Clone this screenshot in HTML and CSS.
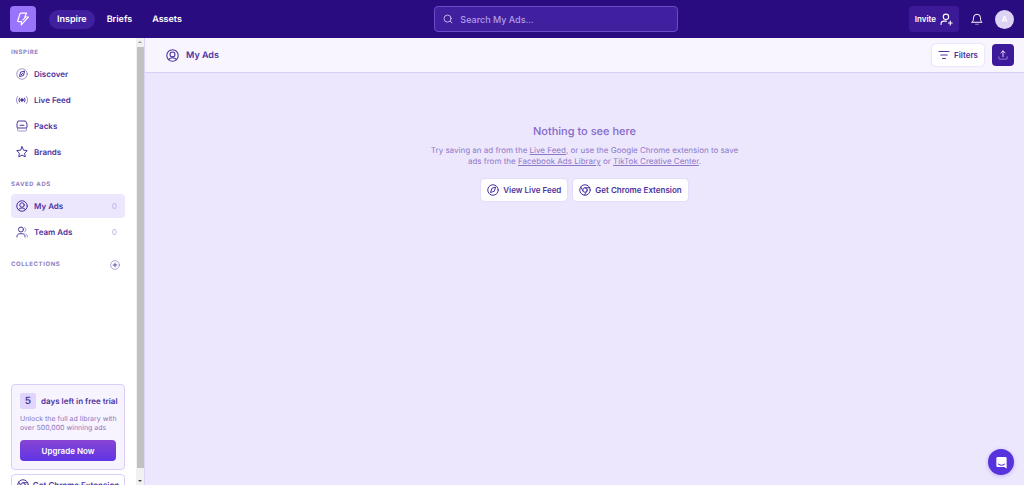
FILE: index.html
```html
<!DOCTYPE html>
<html lang="en">
<head>
  <meta charset="UTF-8" />
  <meta name="viewport" content="width=device-width, initial-scale=1.0"/>
  <title>My Ads</title>
  <link rel="stylesheet" href="styles.css">
</head>
<body>

  <!-- shared icons -->
  <svg class="sprite" aria-hidden="true">
    <symbol id="compass" viewBox="0 0 24 24">
      <circle cx="12" cy="12" r="10.500"/>
      <path d="M17 7l-2.500 7.500-7.500 2.500 2.500-7.500z"/>
    </symbol>
    <symbol id="user-circle" viewBox="0 0 24 24">
      <circle cx="12" cy="12" r="10.500"/>
      <circle cx="12" cy="10" r="4.500"/>
      <path d="M5 19.500c1.500-2.500 4-3.500 7-3.500s5.500 1 7 3.500"/>
    </symbol>
    <symbol id="chrome" viewBox="0 0 24 24">
      <circle cx="12" cy="12" r="10.500"/>
      <circle cx="12" cy="12" r="4.500"/>
      <path d="M21.500 7.500H12M3.500 6L8 14M10.900 22L16 14"/>
    </symbol>
  </svg>

  <header class="topbar">
    <div class="topbar-left">
      <a href="#" class="logo" aria-label="Home">
        <svg viewBox="0 0 24 24"><path d="M8.500 2H18l-3 6.500h6.500L9 22l.5-5.500H4q-1.500 0-1-1.500L6.500 4q.5-2 2-2z"/><path d="M16 9.500L12 13.500"/></svg>
      </a>
      <nav class="tabs">
        <a href="#" class="tab active">Inspire</a>
        <a href="#" class="tab">Briefs</a>
        <a href="#" class="tab">Assets</a>
      </nav>
    </div>

    <label class="search">
      <svg class="icon" viewBox="0 0 24 24"><circle cx="11" cy="11" r="8.500"/><path d="M17.500 17.500l4 4"/></svg>
      <input type="search" placeholder="Search My Ads..." aria-label="Search My Ads" />
    </label>

    <div class="topbar-right">
      <button type="button" class="invite">
        Invite
        <svg class="icon" viewBox="0 0 24 24"><circle cx="11" cy="7" r="5"/><path d="M2 21v-1.500c0-3 2.500-4.500 5-4.500h5M19 15v7M15.500 18.500h7"/></svg>
      </button>
      <button type="button" class="bell" aria-label="Notifications">
        <svg class="icon" viewBox="0 0 24 24"><path d="M2 18.500h20c-2.500-2-3-4-3-9a7 7 0 0 0-14 0c0 5-.5 7-3 9z"/><path class="faint" d="M9 22.500h6"/></svg>
      </button>
      <button type="button" class="avatar">A</button>
    </div>
  </header>

  <div class="layout">
    <aside class="sidebar">
      <div class="sidebar-content">
        <section class="group">
          <h2>Inspire</h2>
          <a href="#" class="item">
            <svg class="icon" viewBox="0 0 24 24"><circle class="faint" cx="12" cy="12" r="10.500"/><path d="M17 7l-2 8-8 2 2-8z"/><path d="M13.500 10.500l-3 3"/></svg>
            Discover
          </a>
          <a href="#" class="item">
            <svg class="icon" viewBox="0 0 24 24"><circle class="solid" cx="12" cy="12" r="2.500"/><path d="M7 8a6.500 6.500 0 0 0 0 8M17 8a6.500 6.500 0 0 1 0 8"/><path class="faint" d="M3.500 4.500a11 11 0 0 0 0 15M20.500 4.500a11 11 0 0 1 0 15"/></svg>
            Live Feed
          </a>
          <a href="#" class="item">
            <svg class="icon" viewBox="0 0 24 24"><path d="M5 2h14l3 6v6a2 2 0 0 1-2 2H4a2 2 0 0 1-2-2V8zM8 10.500h8"/><path class="faint" d="M3 16v4a2 2 0 0 0 2 2h14a2 2 0 0 0 2-2v-4"/></svg>
            Packs
          </a>
          <a href="#" class="item">
            <svg class="icon" viewBox="0 0 24 24"><path d="M12 1.500l3.200 6.800 7.300 1-5.300 5.100 1.300 7.300L12 18.200l-6.500 3.500 1.300-7.300L1.500 9.300l7.300-1z"/></svg>
            Brands
          </a>
        </section>

        <section class="group">
          <h2>Saved Ads</h2>
          <a href="#" class="item selected">
            <svg class="icon"><use href="#user-circle"/></svg>
            My Ads
            <span class="count">0</span>
          </a>
          <a href="#" class="item">
            <svg class="icon" viewBox="0 0 24 24"><circle cx="10" cy="7" r="5"/><path d="M2 22v-1.500c0-3 2.500-5 5-5h6c2.500 0 5 2 5 5V22"/><path class="faint" d="M17 3c4 1 4 8 0 9M20 16c2 1 3 3 3 6"/></svg>
            Team Ads
            <span class="count">0</span>
          </a>
        </section>

        <section class="group collections">
          <div class="group-head">
            <h2>Collections</h2>
            <button type="button" aria-label="Add collection">
              <svg class="icon" viewBox="0 0 24 24"><circle class="faint" cx="12" cy="12" r="10.500"/><path d="M12 7.500v9M7.500 12h9"/></svg>
            </button>
          </div>
        </section>

        <div class="trial">
          <div class="trial-head"><span class="days">5</span>days left in free trial</div>
          <p>Unlock the full ad library with over 500,000 winning ads</p>
          <button type="button">Upgrade Now</button>
        </div>
        <a href="#" class="extension">
          <svg class="icon"><use href="#chrome"/></svg>
          Get Chrome Extension
        </a>
      </div>
      <div class="scrollbar" aria-hidden="true">
        <span class="arrow up"></span>
        <span class="thumb"></span>
        <span class="arrow down"></span>
      </div>
    </aside>

    <main class="main">
      <div class="page-head">
        <h1><svg class="icon"><use href="#user-circle"/></svg>My Ads</h1>
        <div class="actions">
          <button type="button" class="btn">
            <svg class="icon" viewBox="0 0 24 24"><path d="M2 5h20M5.500 12h13M9 19h6"/></svg>
            Filters
          </button>
          <button type="button" class="upload" aria-label="Upload">
            <svg class="icon" viewBox="0 0 24 24"><path d="M12 16V2M7 7l5-5 5 5"/><path class="faint" d="M2 16v4a2 2 0 0 0 2 2h16a2 2 0 0 0 2-2v-4"/></svg>
          </button>
        </div>
      </div>

      <div class="empty">
        <h2>Nothing to see here</h2>
        <p>Try saving an ad from the <a href="#">Live Feed</a>, or use the Google Chrome extension to save ads from the <a href="#">Facebook Ads Library</a> or <a href="#">TikTok Creative Center</a>.</p>
        <div class="empty-actions">
          <button type="button" class="btn"><svg class="icon"><use href="#compass"/></svg>View Live Feed</button>
          <button type="button" class="btn"><svg class="icon"><use href="#chrome"/></svg>Get Chrome Extension</button>
        </div>
      </div>
    </main>
  </div>

  <button type="button" class="chat" aria-label="Open chat">
    <svg viewBox="0 0 24 24"><path class="bubble" d="M5 2h14a2.500 2.500 0 0 1 2.500 2.500V23L17 20.500H5A2.500 2.500 0 0 1 2.500 18V4.500A2.500 2.500 0 0 1 5 2z"/><path class="smile" d="M6.500 15c3.500 2.500 7.500 2.500 11 0"/></svg>
  </button>

</body>
</html>
```

FILE: styles.css
```css
* { margin: 0; padding: 0; box-sizing: border-box; }

body {
  height: 100vh;
  display: flex;
  flex-direction: column;
  overflow: hidden;
  font-family: Inter, sans-serif;
  font-size: 8px;
  font-weight: 600;
  text-rendering: geometricPrecision;
  color: #4c32a0;
  background: #ede7fe;
}

a { color: inherit; text-decoration: none; }

button {
  font: inherit;
  color: inherit;
  border: none;
  background: none;
  cursor: pointer;
}

.sprite { position: absolute; width: 0; height: 0; }

.icon {
  width: 12px;
  height: 12px;
  flex: none;
  fill: none;
  stroke: currentColor;
  stroke-width: 2;
  stroke-linecap: round;
  stroke-linejoin: round;
}

.icon .faint { opacity: 0.5; }
.icon .solid { fill: currentColor; }

/* top bar */
.topbar {
  height: 38px;
  flex: none;
  padding: 0 10px;
  display: flex;
  align-items: center;
  justify-content: space-between;
  background: #2a0c81;
  color: #fff;
}

.topbar-left,
.topbar-right,
.tabs {
  display: flex;
  align-items: center;
}

.topbar-left {
  gap: 13px;
  padding-right: 14px;
}

.logo {
  width: 26px;
  height: 26px;
  display: grid;
  place-items: center;
  border-radius: 4px;
  background: #9874fb;
}

.logo svg {
  width: 14px;
  height: 14px;
  fill: none;
  stroke: #fff;
  stroke-width: 2;
  stroke-linecap: round;
  stroke-linejoin: round;
}

.tabs { gap: 4px; }

.tab {
  padding: 0 8px;
  font-size: 9px;
  line-height: 19px;
  border-radius: 10px;
}

.tab.active { background: #4120a0; }

.search {
  width: 244px;
  height: 26px;
  padding: 0 8px;
  display: flex;
  align-items: center;
  gap: 7px;
  border: 1px solid #6a4bc8;
  border-radius: 4px;
  background: #4120a0;
  color: #d9ccfb;
}

.search .icon { width: 10px; height: 10px; }

.search input {
  flex: 1;
  min-width: 0;
  border: none;
  outline: none;
  background: none;
  color: #fff;
  font: 500 9px Inter, sans-serif;
}

.search input::placeholder { color: #b19ee6; }

.invite {
  height: 26px;
  padding: 0 6px;
  display: flex;
  align-items: center;
  gap: 4px;
  border-radius: 4px;
  background: #3b1997;
}

.invite .icon { width: 13px; height: 13px; }

.bell { margin: 0 12px; display: flex; }

.avatar {
  width: 19px;
  height: 19px;
  border-radius: 50%;
  background: #ddd3f5;
  color: #fff;
}

/* sidebar */
.layout {
  flex: 1;
  min-height: 0;
  display: flex;
}

.sidebar {
  width: 145px;
  flex: none;
  display: flex;
  overflow: hidden;
  background: #fff;
  border-right: 1px solid #ddd3f8;
}

.sidebar-content {
  flex: 1;
  min-width: 0;
  padding: 10px 11px 0;
}

.group { margin-bottom: 16px; }

.group h2 {
  margin-bottom: 4px;
  font-size: 6px;
  line-height: 10px;
  letter-spacing: 0.1em;
  text-transform: uppercase;
  color: #8f80c2;
}

.item {
  height: 24px;
  padding: 0 8px 0 5px;
  margin-bottom: 2px;
  display: flex;
  align-items: center;
  gap: 6px;
  border-radius: 4px;
}

.item.selected { background: #ede7fe; }

.count {
  margin-left: auto;
  font-weight: 500;
  color: #c6b6f3;
}

.group-head {
  display: flex;
  justify-content: space-between;
  padding-right: 5px;
}

.group-head button { height: 10px; }
.group-head .icon { width: 10px; height: 10px; }

.collections { min-height: 108px; }

.trial {
  padding: 8px;
  border: 1px solid #d9cef8;
  border-radius: 4px;
  background: #f7f4ff;
}

.trial-head {
  display: flex;
  align-items: center;
  gap: 5px;
  white-space: nowrap;
}

.days {
  width: 16px;
  flex: none;
  font-size: 10px;
  line-height: 16px;
  text-align: center;
  border-radius: 2px;
  background: #e0d6fc;
}

.trial p {
  margin: 5px -6px 8px 0;
  font-size: 7px;
  font-weight: 400;
  line-height: 9px;
  color: #8a76c0;
}

.trial button {
  width: 100%;
  height: 21px;
  border-radius: 4px;
  background: linear-gradient(#8744d2, #5f35e5);
  color: #fff;
}

.extension {
  height: 22px;
  margin-top: 4px;
  display: flex;
  align-items: center;
  justify-content: center;
  gap: 4px;
  border: 1px solid #d9cef8;
  border-radius: 4px;
  white-space: nowrap;
}

.scrollbar {
  width: 8px;
  flex: none;
  display: flex;
  flex-direction: column;
  align-items: center;
  background: #f1f1f1;
}

.thumb {
  flex: 1;
  width: 7px;
  margin: 4px 0 12px;
  background: #c1c1c1;
}

.arrow { border: 2px solid transparent; }

.arrow.up {
  margin-top: 3px;
  border-top: none;
  border-bottom-color: #999;
}

.arrow.down {
  margin-bottom: 3px;
  border-bottom: none;
  border-top-color: #444;
}

/* main area */
.main { flex: 1; min-width: 0; }

.page-head {
  height: 35px;
  padding: 0 10px 0 21px;
  display: flex;
  align-items: center;
  justify-content: space-between;
  background: #f8f5ff;
  border-bottom: 1px solid #d9cef8;
}

.page-head h1 {
  display: flex;
  align-items: center;
  gap: 7px;
  font-size: 9px;
  font-weight: 600;
}

.page-head h1 .icon { width: 13px; height: 13px; }

.actions { display: flex; gap: 8px; }

.btn {
  height: 22px;
  padding: 0 6px;
  display: flex;
  align-items: center;
  gap: 4px;
  border-radius: 4px;
  background: #fff;
  box-shadow: 0 0 2px #cfc2f2;
}

.upload {
  width: 22px;
  height: 22px;
  display: grid;
  place-items: center;
  border-radius: 4px;
  background: #3d1a9c;
  color: #fff;
}

.upload .icon { width: 10px; height: 10px; }

.empty {
  padding: 50px 20px 0;
  text-align: center;
}

.empty h2 {
  font-size: 11px;
  font-weight: 500;
  line-height: 16px;
  color: #8469c9;
}

.empty p {
  max-width: 316px;
  margin: 6px auto 12px;
  font-weight: 400;
  line-height: 11px;
  color: #8d78c6;
}

.empty p a { text-decoration: underline; }

.empty-actions {
  display: flex;
  justify-content: center;
  gap: 6px;
}

.chat {
  position: fixed;
  right: 10px;
  bottom: 10px;
  width: 26px;
  height: 26px;
  display: grid;
  place-items: center;
  border-radius: 50%;
  background: #5633dc;
  box-shadow: 0 1px 4px #c0b1ee;
}

.chat svg { width: 13px; height: 13px; }
.bubble { fill: #fff; }

.smile {
  fill: none;
  stroke: #5633dc;
  stroke-width: 2;
  stroke-linecap: round;
}
```
